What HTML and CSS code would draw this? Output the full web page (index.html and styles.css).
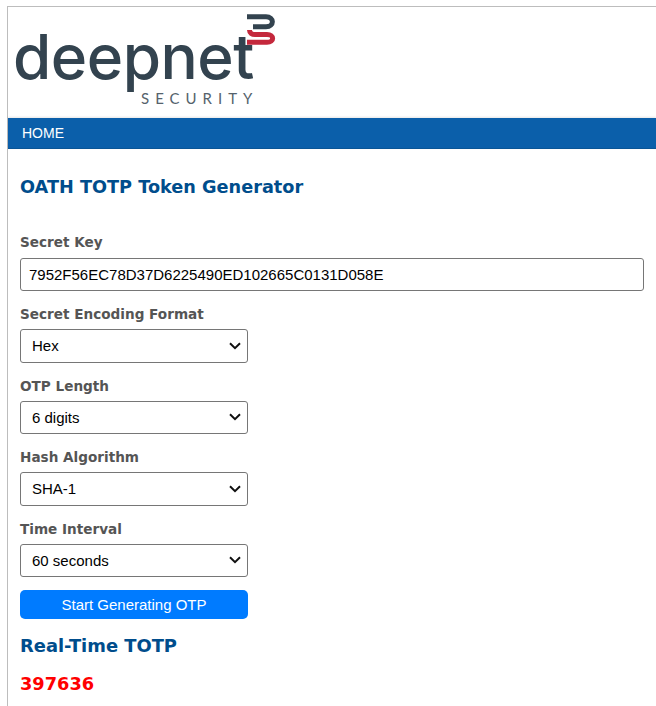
FILE: index.html
```html
<!DOCTYPE html>
<html lang="en">
<head>
    <meta charset="UTF-8">
    <title>OATH TOTP Token Generator</title>
    <link rel="stylesheet" href="styles.css">
</head>
<body>
    <div class="page">
        <div class="header">
            <div class="logo">
                <span class="logo-name">deepnet</span>
                <span class="logo-sub">SECURITY</span>
                <svg class="logo-mark" width="30" height="32" viewBox="0 0 30 32">
                    <path d="M0 2.7H19C27.5 2.7 27.5 12.7 19 12.7H6" fill="none" stroke="#33434f" stroke-width="5"/>
                    <path d="M2.5 16C2.5 19 5 20.5 8 20.5H20C27.5 20.5 27.5 28.3 20 28.3H0" fill="none" stroke="#c4283c" stroke-width="5"/>
                </svg>
            </div>
        </div>
        <div class="nav"><a href="#">HOME</a></div>
        <div class="container">
            <h2>OATH TOTP Token Generator</h2>

            <label for="secret">Secret Key</label>
            <input type="text" id="secret" value="7952F56EC78D37D6225490ED102665C0131D058E">

            <label for="format">Secret Encoding Format</label>
            <select id="format">
                <option>Hex</option>
                <option>Base32</option>
            </select>

            <label for="length">OTP Length</label>
            <select id="length">
                <option>6 digits</option>
                <option>8 digits</option>
            </select>

            <label for="hash">Hash Algorithm</label>
            <select id="hash">
                <option>SHA-1</option>
                <option>SHA-256</option>
            </select>

            <label for="interval">Time Interval</label>
            <select id="interval">
                <option>60 seconds</option>
                <option>30 seconds</option>
            </select>

            <button>Start Generating OTP</button>

            <h3>Real-Time TOTP</h3>
            <p class="otp">397636</p>
        </div>
    </div>
</body>
</html>
```

FILE: styles.css
```css
html, body {
    overflow: hidden;
}
body {
    margin: 6px 0 0 7px;
    background: #fff;
    font-family: "Liberation Sans", Arial, sans-serif;
}
.page {
    min-height: 700px;
    border-top: 1px solid #bdbdbd;
    border-left: 1px solid #bdbdbd;
}
.header {
    height: 111px;
}
.logo {
    position: relative;
    width: 270px;
    padding: 19px 0 0 5px;
    box-sizing: border-box;
    height: 111px;
    font-family: Inter, sans-serif;
    color: #33434f;
}
.logo-name {
    display: block;
    font-size: 62px;
    font-weight: 500;
    line-height: 62px;
    letter-spacing: -0.5px;
}
.logo-sub {
    display: block;
    margin: 3px 0 0 128px;
    font-family: Lato, sans-serif;
    font-size: 15px;
    line-height: 14px;
    letter-spacing: 6px;
    color: #55626c;
}
.logo-mark {
    position: absolute;
    left: 239px;
    top: 7px;
}
.nav {
    height: 31px;
    background: #0b5faa;
    padding-left: 14px;
    line-height: 31px;
    font-size: 14px;
    box-shadow: inset 0 -1px 0 #0a5596, 0 -1px 2px rgba(0, 0, 0, 0.1);
}
.nav a {
    color: #fff;
    text-decoration: none;
}
.container {
    padding: 0 12px;
}
h2 {
    margin: 0 0 36px;
    padding-top: 27px;
    font-family: "DejaVu Sans", Verdana, sans-serif;
    font-size: 17.7px;
    line-height: 22px;
    color: #004d8c;
}
label {
    display: block;
    margin: 15px 0 7px;
    font-family: "DejaVu Sans", Verdana, sans-serif;
    font-size: 13.6px;
    line-height: 16px;
    font-weight: bold;
    color: #555;
}
input {
    display: block;
    box-sizing: border-box;
    width: 624px;
    height: 33px;
    margin: 8px 0 15px;
    padding: 0 8px;
    border: 1px solid #767676;
    border-radius: 3px;
    font-family: "Liberation Sans", Arial, sans-serif;
    font-size: 15px;
}
select {
    display: block;
    box-sizing: border-box;
    width: 228px;
    height: 33.5px;
    padding: 0 11px;
    border: 1px solid #767676;
    border-radius: 3px;
    background: #fff url("data:image/svg+xml,%3Csvg xmlns='http://www.w3.org/2000/svg' width='12' height='8'%3E%3Cpath d='M1 1.2L6 6.2L11 1.2' fill='none' stroke='%23111' stroke-width='2'/%3E%3C/svg%3E") no-repeat right 6px center;
    appearance: none;
    font-family: "Liberation Sans", Arial, sans-serif;
    font-size: 15px;
    color: #000;
}
button {
    display: block;
    width: 228px;
    height: 29px;
    margin-top: 13px;
    padding: 0;
    background: #007bff;
    color: #fff;
    border: none;
    border-radius: 5px;
    font-family: "Liberation Sans", Arial, sans-serif;
    font-size: 15px;
}
h3 {
    margin: 16px 0 0;
    font-family: "DejaVu Sans", Verdana, sans-serif;
    font-size: 17.9px;
    line-height: 22px;
    color: #004d8c;
}
.otp {
    margin: 15px 0 0;
    font-family: "DejaVu Sans", Verdana, sans-serif;
    font-size: 17.8px;
    line-height: 24px;
    font-weight: bold;
    color: #f00;
}
```
